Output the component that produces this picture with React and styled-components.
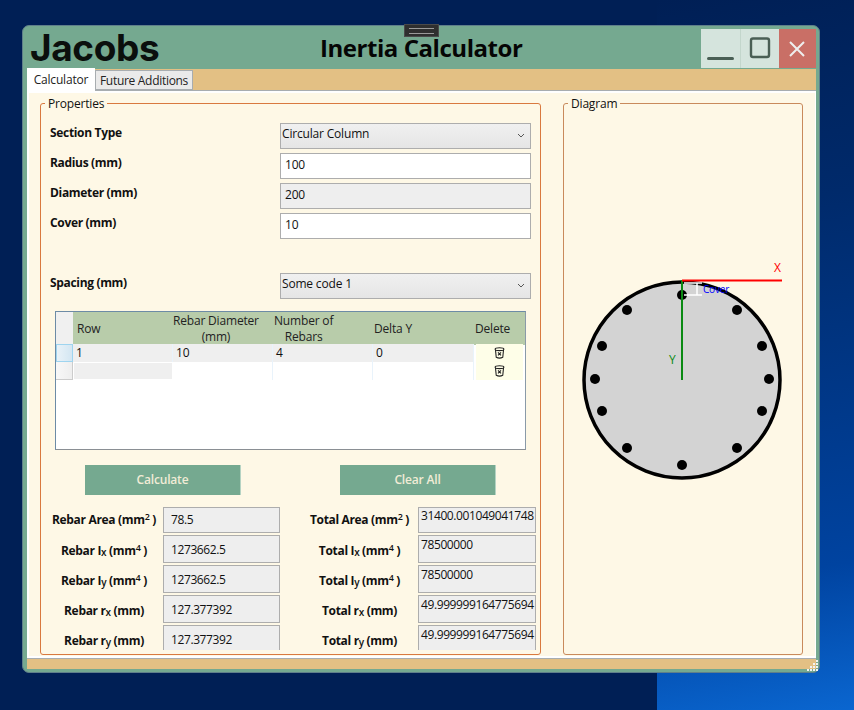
import React from 'react';
import styled, { createGlobalStyle } from 'styled-components';

const Global = createGlobalStyle`
  html, body { margin: 0; padding: 0; height: 100%; }
  body { background: #001f55; font-family: "Open Sans", "Noto Sans", sans-serif; color: #111; letter-spacing: -0.18px; }
  * { box-sizing: border-box; }
`;

const Desktop = styled.div`
  position: relative;
  width: 854px;
  height: 710px;
  overflow: hidden;
  padding: 25px 0 0 22px;
  background: #001f55;
`;

const Wallpaper = styled.div`
  position: absolute;
  left: 657px;
  top: 0;
  width: 197px;
  height: 710px;
  background: linear-gradient(170deg, #001f55 0%, #002a6b 30%, #0043a0 80%, #0a66d0 100%);
`;

const Win = styled.div`
  position: relative;
  width: 798px;
  height: 648px;
  background: #75a990;
  border: 1px solid #5f7f8a;
  border-radius: 7px;
  display: flex;
  flex-direction: column;
  padding: 1px 3px 3px 4px;
`;

const Handle = styled.div`
  position: absolute;
  left: 381px;
  top: -2px;
  width: 35px;
  height: 13px;
  background: #2f2f2f;
  border: 1px solid #4a4a4a;
  display: flex;
  align-items: center;
  justify-content: center;
  &::after {
    content: '';
    width: 25px;
    height: 4px;
    border-top: 1px solid #9a9a9a;
    border-bottom: 1px solid #9a9a9a;
  }
`;

const TitleBar = styled.div`
  height: 42px;
  flex: none;
  display: flex;
  align-items: flex-start;
  position: relative;
`;

const Logo = styled.div`
  width: 293px;
  padding: 1px 0 0 3px;
  font-family: Inter, sans-serif;
  font-weight: 700;
  font-size: 37px;
  line-height: 40px;
  letter-spacing: -0.4px;
  color: #0b0f0d;
`;

const Title = styled.h1`
  margin: 6px 0 0;
  font-size: 24px;
  line-height: 30px;
  font-weight: 700;
  letter-spacing: -0.45px;
  color: #050505;
  flex: 1;
`;

const WinButtons = styled.div`
  display: flex;
  height: 39px;
  margin-top: 2px;
`;

const WinBtn = styled.div`
  width: ${p => p.$w}px;
  height: 39px;
  background: ${p => p.$bg};
  border-right: 1px solid ${p => p.$line || 'transparent'};
  display: flex;
  align-items: center;
  justify-content: center;
`;

const Tabs = styled.div`
  height: 22px;
  flex: none;
  background: #e3c084;
  border-bottom: 1px solid #a8adb0;
  display: flex;
  align-items: flex-end;
`;

const Tab = styled.div`
  height: ${p => (p.$active ? 23 : 20)}px;
  width: ${p => (p.$active ? 68 : 98)}px;
  margin-bottom: ${p => (p.$active ? -1 : 0)}px;
  background: ${p => (p.$active ? '#fff' : '#eaeaea')};
  border: 1px solid ${p => (p.$active ? '#fff' : '#a8adb0')};
  font-size: 12px;
  line-height: ${p => (p.$active ? 22 : 19)}px;
  letter-spacing: ${p => (p.$active ? '-0.18px' : '-0.3px')};
  text-align: center;
  color: #222;
  position: relative;
`;

const Content = styled.div`
  flex: 1;
  background: #fef8e6;
  border: solid #fff;
  border-width: 2px 1px 2px 2px;
  display: flex;
  gap: 22px;
  padding: 9px 0 0 11px;
`;

const Group = styled.fieldset`
  margin: -5px 0 0;
  width: ${p => p.$w}px;
  height: 558px;
  border: 1px solid ${p => p.$line};
  border-radius: 3px;
  padding: 0;
  position: relative;
  min-width: 0;
  legend {
    margin-left: 4px;
    padding: 0 3px;
    font-size: 12px;
    line-height: 13px;
  }
`;

const Form = styled.div`
  padding-top: 13px;
`;

const FormRow = styled.div`
  display: flex;
  height: 26px;
  margin-bottom: 4px;
  padding-left: 9px;
`;

const Label = styled.div`
  width: 230px;
  font-size: 12px;
  font-weight: 700;
  line-height: 20px;
  letter-spacing: -0.33px;
  color: #111;
`;

const Field = styled.div`
  width: 251px;
  height: 26px;
  border: 1px solid #adadad;
  background: ${p => (p.$ro ? '#eee' : '#fff')};
  font-size: 12px;
  line-height: 22px;
  padding-left: 4px;
  color: #111;
`;

const Select = styled.div`
  width: 251px;
  height: 26px;
  border: 1px solid #adadad;
  background: linear-gradient(180deg, #f0f0f0, #e5e5e5);
  font-size: 12px;
  line-height: 19px;
  padding-left: 1px;
  display: flex;
  justify-content: space-between;
  color: #111;
`;

const Caret = styled.svg`
  width: 8px;
  height: 5px;
  margin: 9px 5px 0 0;
`;

const Spacer = styled.div`
  height: 30px;
`;

const Grid = styled.div`
  margin: 12px 0 0 14px;
  width: 471px;
  height: 139px;
  border: 1px solid #6d8ba6;
  border-bottom-color: #8a8f94;
  border-right-color: #8a9aa8;
  background: #fff;
`;

const HeadRow = styled.div`
  display: grid;
  grid-template-columns: 17px 100px 100px 100px 101px 1fr;
  height: 32px;
  background: #fff;
`;

const HeadCorner = styled.div`
  background: #f0f0f0;
`;

const Head = styled.div`
  background: #b8ccaa;
  font-size: 12px;
  line-height: 16px;
  display: flex;
  align-items: center;
  text-align: center;
  padding-top: 1px;
  padding-left: ${p => p.$pad || 0}px;
  color: #222;
`;

const DataRow = styled.div`
  display: grid;
  grid-template-columns: 17px 100px 100px 100px 101px 1fr;
  height: 18px;
`;

const RowHead = styled.div`
  background: ${p => (p.$sel ? 'linear-gradient(90deg, #e9f2f8, #d3e6f2)' : 'linear-gradient(90deg, #f8f8f8, #eee)')};
  border: ${p => (p.$sel ? '1px solid #9ed4ef' : 'none')};
  border-right: ${p => (p.$sel ? '1px solid #9ed4ef' : '1px solid #ccc')};
  border-bottom: ${p => (p.$sel ? '1px solid #9ed4ef' : '1px solid #ccc')};
`;

const Cell = styled.div`
  background: ${p => (p.$fill ? '#efefef' : '#fff')};
  border-right: 1px solid #e9f3fb;
  font-size: 12px;
  line-height: 18px;
  padding-left: 3px;
  color: #111;
`;

const BlankCell = styled.div`
  background: #efefef;
  margin: 1px 1px 0 1px;
  height: 16px;
`;

const DeleteCell = styled.div`
  background: #fefee8;
  margin: 0 2px 0 2px;
  height: 18px;
  display: flex;
  align-items: center;
  justify-content: center;
`;

const Actions = styled.div`
  display: flex;
  padding: 15px 0 0 44px;
  gap: 99px;
`;

const ActionButton = styled.div`
  width: 156px;
  height: 30px;
  background: #75a990;
  border-right: 1px solid #b5d3c3;
  color: #f1ecd6;
  font-size: 12px;
  font-weight: 600;
  line-height: 30px;
  text-align: center;
`;

const Results = styled.div`
  display: grid;
  grid-template-columns: 250px 246px;
  padding-top: 12px;
  height: 155px;
  overflow: hidden;
`;

const ResultCol = styled.div`
  display: flex;
  flex-direction: column;
`;

const ResultRow = styled.div`
  display: flex;
  height: ${p => (p.$first ? 28 : 30)}px;
  flex: none;
  align-items: flex-start;
`;

const ResultLabel = styled.div`
  width: ${p => p.$w}px;
  padding-left: ${p => p.$pad}px;
  flex: none;
  text-align: center;
  font-size: 12px;
  font-weight: 700;
  letter-spacing: -0.33px;
  line-height: ${p => (p.$first ? 26 : 31)}px;
  white-space: nowrap;
  sub { font-size: 10px; line-height: 0; vertical-align: -1px; font-weight: 600; }
  sup { font-size: 9px; line-height: 0; vertical-align: 4px; font-weight: 600; }
`;

const ResultValue = styled.div`
  width: ${p => p.$w}px;
  height: ${p => (p.$first ? 26 : 28)}px;
  flex: none;
  background: #eee;
  border: 1px solid #adadad;
  font-size: 12px;
  letter-spacing: -0.4px;
  white-space: nowrap;
  overflow: hidden;
  padding-left: ${p => (p.$top ? 2 : 7)}px;
  line-height: ${p => (p.$top ? (p.$first ? '15px' : '17px') : (p.$first ? '24px' : '27px'))};
  color: #111;
`;

const DiagramBody = styled.div`
  padding-top: 150px;
`;

const Section = styled.svg`
  width: 238px;
  height: 230px;
  display: block;
`;

const ResizeGrip = styled.svg`
  position: absolute;
  right: 0;
  bottom: 0;
`;

const BottomBar = styled.div`
  height: 11px;
  flex: none;
  background: #e3c084;
  border-top: 1px solid #a8adb0;
`;

const Trash = () => (
  <svg width="11" height="12" viewBox="0 0 10 11" fill="none" stroke="#222" strokeWidth="1">
    <ellipse cx="5" cy="2" rx="4" ry="1.3" />
    <path d="M1.3 2.5 2 9.4Q5 11 8 9.4L8.7 2.5" />
    <path d="M3.6 5 6.4 7.6M6.4 5 3.6 7.6" />
  </svg>
);

const DownCaret = () => (
  <Caret viewBox="0 0 8 5" fill="none" stroke="#555" strokeWidth="1">
    <path d="M1 1 4 4 7 1" />
  </Caret>
);

const rebars = [
  [682, 295], [737, 310], [762, 346], [769, 379], [762, 411], [737, 448], [682, 465],
  [627, 448], [602, 411], [595, 379], [602, 346], [627, 310],
];

const leftResults = [
  { label: <>Rebar Area (mm<sup>2</sup> )</>, value: '78.5' },
  { label: <>Rebar I<sub>x</sub> (mm<sup>4</sup> )</>, value: '1273662.5' },
  { label: <>Rebar I<sub>y</sub> (mm<sup>4</sup> )</>, value: '1273662.5' },
  { label: <>Rebar r<sub>x</sub> (mm)</>, value: '127.377392' },
  { label: <>Rebar r<sub>y</sub> (mm)</>, value: '127.377392' },
];

const rightResults = [
  { label: <>Total Area (mm<sup>2</sup> )</>, value: '31400.001049041748' },
  { label: <>Total I<sub>x</sub> (mm<sup>4</sup> )</>, value: '78500000' },
  { label: <>Total I<sub>y</sub> (mm<sup>4</sup> )</>, value: '78500000' },
  { label: <>Total r<sub>x</sub> (mm)</>, value: '49.999999164775694' },
  { label: <>Total r<sub>y</sub> (mm)</>, value: '49.999999164775694' },
];

export default function App() {
  return (
    <Desktop>
      <Global />
      <Wallpaper />
      <Win>
        <Handle />
        <TitleBar>
          <Logo>Jacobs</Logo>
          <Title>Inertia Calculator</Title>
          <WinButtons>
            <WinBtn $w={40} $bg="#d5e4dd" $line="#c3d6cc">
              <svg width="39" height="39"><rect x="6" y="28" width="27" height="3" rx="1.5" fill="#4a5f55" /></svg>
            </WinBtn>
            <WinBtn $w={38} $bg="#d5e4dd">
              <svg width="38" height="39"><rect x="10" y="9.5" width="18" height="18.5" rx="2" fill="none" stroke="#4a5f55" strokeWidth="2.4" /></svg>
            </WinBtn>
            <WinBtn $w={37} $bg="#c96f66">
              <svg width="37" height="39"><path d="M11 13 25 27M25 13 11 27" stroke="#eee" strokeWidth="2" /></svg>
            </WinBtn>
          </WinButtons>
        </TitleBar>
        <Tabs>
          <Tab $active>Calculator</Tab>
          <Tab>Future Additions</Tab>
        </Tabs>
        <Content>
          <Group $w={501} $line="#d9793f">
            <legend>Properties</legend>
            <Form>
              <FormRow><Label>Section Type</Label><Select>Circular Column<DownCaret /></Select></FormRow>
              <FormRow><Label>Radius (mm)</Label><Field>100</Field></FormRow>
              <FormRow><Label>Diameter (mm)</Label><Field $ro>200</Field></FormRow>
              <FormRow><Label>Cover (mm)</Label><Field>10</Field></FormRow>
              <Spacer />
              <FormRow><Label>Spacing (mm)</Label><Select>Some code 1<DownCaret /></Select></FormRow>
            </Form>
            <Grid>
              <HeadRow>
                <HeadCorner />
                <Head $pad={4}>Row</Head>
                <Head>Rebar Diameter<br />(mm)</Head>
                <Head $pad={1}>Number of<br />Rebars</Head>
                <Head $pad={1}>Delta Y</Head>
                <Head $pad={1}>Delete</Head>
              </HeadRow>
              <DataRow>
                <RowHead $sel />
                <Cell $fill>1</Cell>
                <Cell $fill>10</Cell>
                <Cell $fill>4</Cell>
                <Cell $fill>0</Cell>
                <DeleteCell><Trash /></DeleteCell>
              </DataRow>
              <DataRow>
                <RowHead />
                <BlankCell />
                <Cell />
                <Cell />
                <Cell />
                <DeleteCell><Trash /></DeleteCell>
              </DataRow>
            </Grid>
            <Actions>
              <ActionButton>Calculate</ActionButton>
              <ActionButton>Clear All</ActionButton>
            </Actions>
            <Results>
              <ResultCol>
                {leftResults.map((r, i) => (
                  <ResultRow key={i} $first={i === 0}>
                    <ResultLabel $w={122} $pad={4} $first={i === 0}>{r.label}</ResultLabel>
                    <ResultValue $w={117} $first={i === 0}>{r.value}</ResultValue>
                  </ResultRow>
                ))}
              </ResultCol>
              <ResultCol>
                {rightResults.map((r, i) => (
                  <ResultRow key={i} $first={i === 0}>
                    <ResultLabel $w={127} $pad={10} $first={i === 0}>{r.label}</ResultLabel>
                    <ResultValue $w={118} $first={i === 0} $top>{r.value}</ResultValue>
                  </ResultRow>
                ))}
              </ResultCol>
            </Results>
          </Group>
          <Group $w={240} $line="#c98a5c">
            <legend>Diagram</legend>
            <DiagramBody>
              <Section viewBox="564 260 238 230">
                <circle cx="682" cy="380" r="98" fill="#d3d3d3" stroke="#000" strokeWidth="3.5" />
                {rebars.map(([x, y], i) => <circle key={i} cx={x} cy={y} r="5" fill="#000" />)}
                <path d="M684 283H702M684 295H702M697 283V295" stroke="#fff" strokeWidth="1.5" fill="none" />
                <line x1="682" y1="280" x2="682" y2="380" stroke="#0a8a12" strokeWidth="2" />
                <line x1="682" y1="280.5" x2="782" y2="280.5" stroke="#f00" strokeWidth="2" />
                <text x="774" y="272" fontSize="12" fill="#f00" fontFamily="Open Sans">X</text>
                <text x="669" y="364" fontSize="12" fill="#0a8a12" fontFamily="Open Sans">Y</text>
                <text x="703" y="293" fontSize="10" fill="#00f" fontFamily="Open Sans">Cover</text>
              </Section>
            </DiagramBody>
          </Group>
        </Content>
        <BottomBar />
        <ResizeGrip width="12" height="12" viewBox="0 0 12 12" fill="#f2f2f2">
          {[[9, 0], [6, 3], [9, 3], [3, 6], [6, 6], [9, 6], [0, 9], [3, 9], [6, 9], [9, 9]].map(([x, y], i) => (
            <rect key={i} x={x} y={y} width="2" height="2" />
          ))}
        </ResizeGrip>
      </Win>
    </Desktop>
  );
}
